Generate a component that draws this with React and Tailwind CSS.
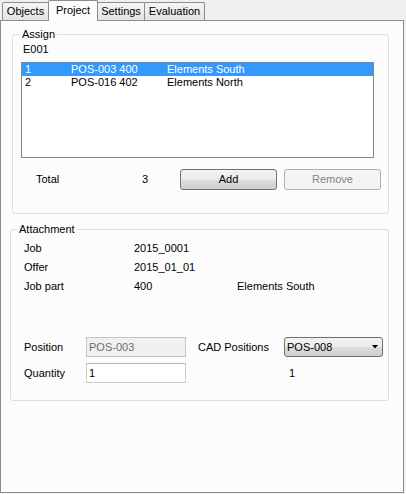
export default function App() {
  const tabBase =
    "flex items-center justify-center border border-b-0 border-[#898c95] rounded-t-[2px]";
  const unsel =
    "h-[18px] bg-gradient-to-b from-[#f5f5f5] to-[#e3e3e3]";
  return (
    <div className="w-[406px] h-[494px] bg-[#f0f0f0] text-[11px] leading-[13px] text-black font-['Liberation_Sans',Arial,sans-serif]">
      {/* tabs */}
      <div className="flex h-[20px] items-end pl-[2px]">
        <div className={`${tabBase} ${unsel} w-[47px]`}>Objects</div>
        <div
          className={`${tabBase} relative z-10 -mb-px -ml-px h-[21px] w-[50px] bg-[#fcfcfc] pb-[2px]`}
        >
          Project
        </div>
        <div className={`${tabBase} ${unsel} -ml-px w-[48px]`}>Settings</div>
        <div className={`${tabBase} ${unsel} -ml-px w-[61px]`}>Evaluation</div>
      </div>

      {/* panel */}
      <div className="w-[404px] h-[473px] border border-[#898c95] bg-[#fcfcfc]">
        {/* Assign */}
        <fieldset className="ml-[11px] mt-[7px] w-[377px] h-[186px] border border-[#d5dfe5] rounded-[3px]">
          <legend className="ml-[7px] px-[2px] leading-[13px]">Assign</legend>
          <div className="mt-[2px] pl-[10px] h-[13px]">E001</div>
          <div className="mt-[6px] ml-[8px] w-[353px] h-[96px] border border-[#828790] bg-white">
            <div className="flex h-[13px] bg-[#3399ff] text-white pl-[3px]">
              <span className="w-[46px]">1</span>
              <span className="w-[96px]">POS-003 400</span>
              <span>Elements South</span>
            </div>
            <div className="flex h-[13px] pl-[3px]">
              <span className="w-[46px]">2</span>
              <span className="w-[96px]">POS-016 402</span>
              <span>Elements North</span>
            </div>
          </div>
          <div className="mt-[11px] flex h-[21px] items-center pl-[23px]">
            <span className="w-[106px]">Total</span>
            <span className="w-[38px]">3</span>
            <button className="flex h-[21px] w-[97px] items-center justify-center rounded-[3px] border border-[#707070] bg-[linear-gradient(to_bottom,#f2f2f2_0%,#ebebeb_50%,#dddddd_50%,#cfcfcf_100%)]">
              Add
            </button>
            <button className="ml-[7px] flex h-[21px] w-[97px] items-center justify-center rounded-[3px] border border-[#adb2b5] bg-[#f4f4f4] text-[#838383]">
              Remove
            </button>
          </div>
        </fieldset>

        {/* Attachment */}
        <fieldset className="ml-[9px] mt-[9px] w-[379px] h-[178px] border border-[#d5dfe5] rounded-[3px]">
          <legend className="ml-[6px] px-[2px] leading-[13px]">Attachment</legend>
          <div className="mt-[3px] pl-[13px]">
            <div className="flex h-[19px] items-center">
              <span className="w-[110px]">Job</span>
              <span>2015_0001</span>
            </div>
            <div className="flex h-[19px] items-center">
              <span className="w-[110px]">Offer</span>
              <span>2015_01_01</span>
            </div>
            <div className="flex h-[19px] items-center">
              <span className="w-[110px]">Job part</span>
              <span className="w-[103px]">400</span>
              <span>Elements South</span>
            </div>

            <div className="mt-[41px] flex h-[20px] items-center">
              <span className="w-[62px]">Position</span>
              <div className="flex h-[20px] w-[100px] items-center border border-[#c4c4c4] bg-[#f0f0f0] pl-[2px] text-[#6d6d6d]">
                POS-003
              </div>
              <span className="ml-[12px] w-[86px]">CAD Positions</span>
              <div className="flex h-[20px] w-[99px] items-center justify-between rounded-[3px] border border-[#707070] bg-[linear-gradient(to_bottom,#f2f2f2_0%,#ebebeb_50%,#dddddd_50%,#cfcfcf_100%)] pl-[2px] pr-[4px]">
                <span>POS-008</span>
                <svg width="6" height="4" viewBox="0 0 6 4">
                  <path d="M0 0h6L3 3.5z" fill="#000" />
                </svg>
              </div>
            </div>
            <div className="mt-[6px] flex h-[20px] items-center">
              <span className="w-[62px]">Quantity</span>
              <div className="flex h-[20px] w-[100px] items-center border border-[#c9c9c9] border-t-[#b5b7bd] bg-white pl-[2px]">
                1
              </div>
              <span className="ml-[12px] w-[86px]"></span>
              <span className="pl-[5px]">1</span>
            </div>
          </div>
        </fieldset>
      </div>
    </div>
  );
}
